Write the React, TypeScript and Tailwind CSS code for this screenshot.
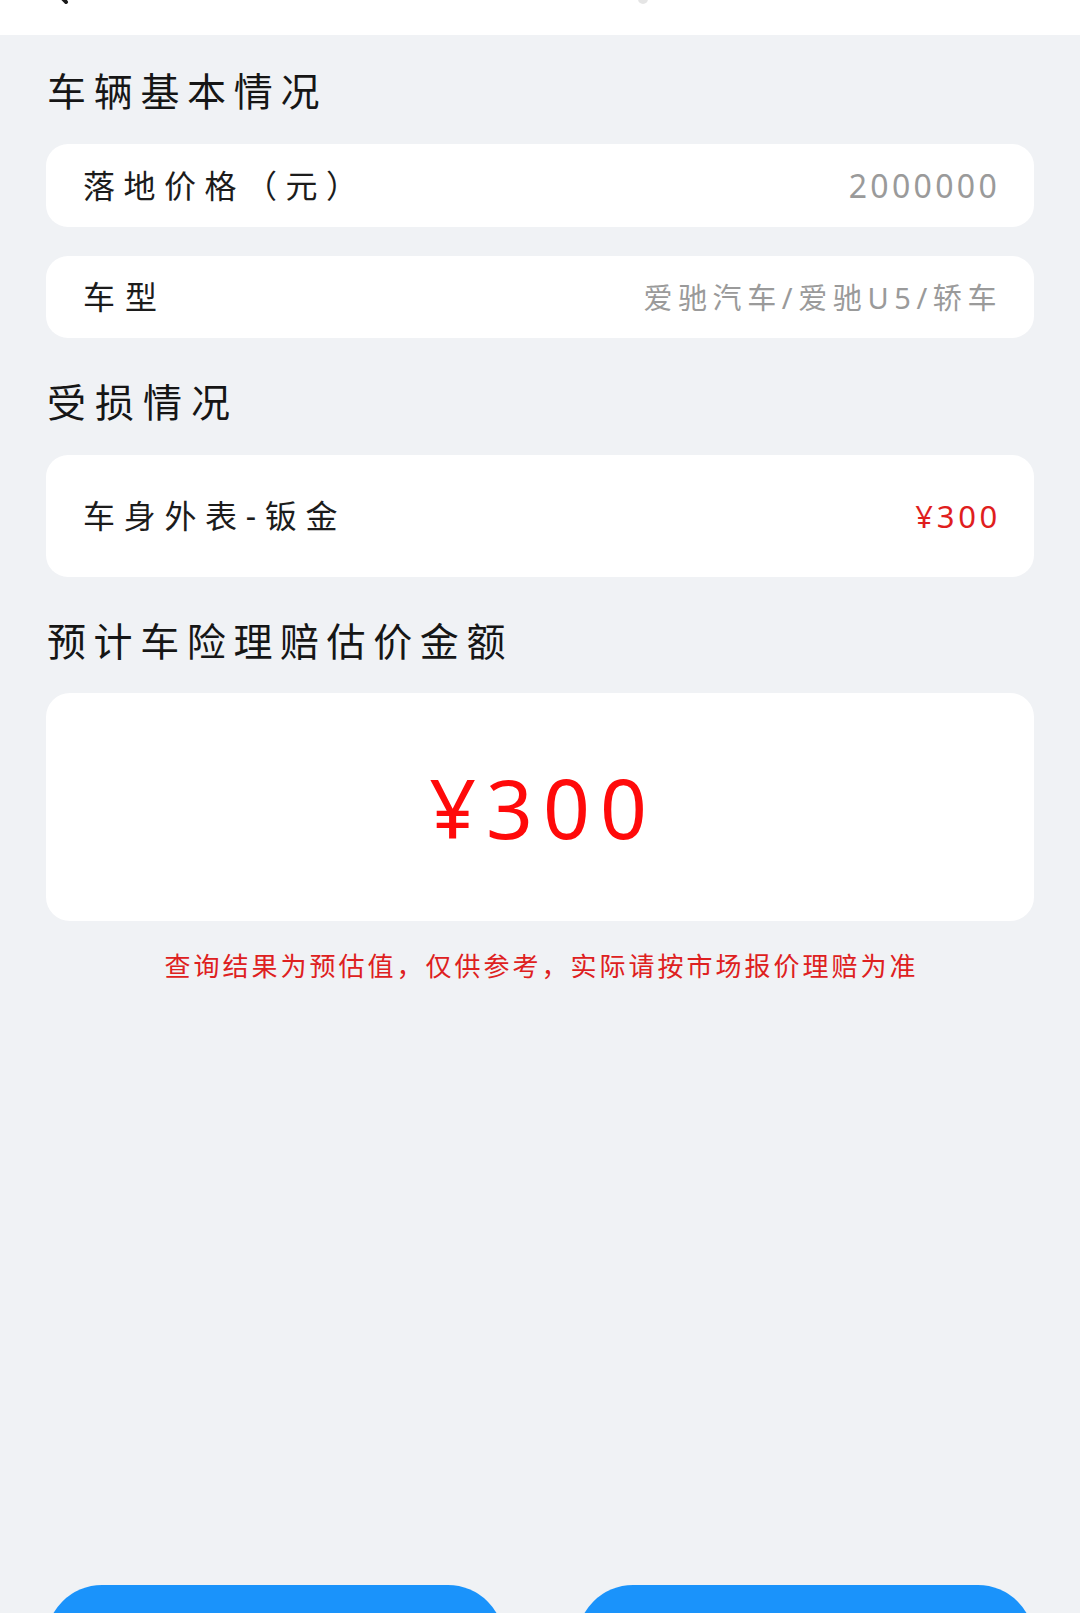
import React from "react";

const font = { fontFamily: "'Noto Sans', 'Noto Sans CJK SC', sans-serif" };

function Heading({ children, className = "" }: { children: React.ReactNode; className?: string }) {
  return (
    <div className={`text-[39px] leading-[36px] text-[#161616] whitespace-nowrap ${className}`}>
      {children}
    </div>
  );
}

function Row({
  label,
  value,
  valueClass,
  height,
  labelTracking,
}: {
  label: string;
  value: string;
  valueClass: string;
  height: string;
  labelTracking: string;
}) {
  return (
    <div className={`flex items-center justify-between bg-white rounded-[22px] px-[37px] ${height}`}>
      <span className={`text-[32px] leading-[32px] text-[#1c1c1c] whitespace-nowrap ${labelTracking}`}>{label}</span>
      <span className={`whitespace-nowrap ${valueClass}`}>{value}</span>
    </div>
  );
}

export default function App() {
  return (
    <div className="w-[1080px] h-[1613px] overflow-hidden bg-[#f0f2f5] flex flex-col" style={font}>
      <div className="relative h-[35px] bg-white overflow-hidden shrink-0">
        <svg className="absolute left-[44px] top-[-30px]" width="30" height="34" viewBox="0 0 30 34">
          <path d="M22 2 L8 17 L22 32" fill="none" stroke="#1a1a1a" strokeWidth="4" strokeLinecap="round" strokeLinejoin="round" />
        </svg>
        <div className="absolute left-[638px] top-[-6px] w-[10px] h-[10px] rounded-full bg-[#e5e5e5]" />
      </div>

      <div className="px-[46px] flex flex-col">
        <Heading className="mt-[38px] ml-[1px] tracking-[7.7px]">车辆基本情况</Heading>
        <div className="mt-[35px]">
          <Row
            label="落地价格（元）"
            labelTracking="tracking-[8.5px]"
            value="2000000"
            height="h-[83px]"
            valueClass="text-[32px] leading-[32px] tracking-[3.3px] text-[#9a9a9a] mr-[-3px]"
          />
        </div>
        <div className="mt-[29px]">
          <Row
            label="车型"
            labelTracking="tracking-[10px]"
            value="爱驰汽车/爱驰U5/轿车"
            height="h-[82px]"
            valueClass="text-[29px] leading-[29px] tracking-[5.6px] text-[#9a9a9a] mr-[-5px]"
          />
        </div>

        <Heading className="mt-[46px] ml-[1px] tracking-[9px]">受损情况</Heading>
        <div className="mt-[35px]">
          <Row
            label="车身外表-钣金"
            labelTracking="tracking-[8.7px]"
            value="¥300"
            height="h-[122px]"
            valueClass="text-[31px] leading-[31px] tracking-[3.7px] text-[#e01e1e] mr-[-4px]"
          />
        </div>

        <Heading className="mt-[46px] ml-[1px] tracking-[7.6px]">预计车险理赔估价金额</Heading>
        <div className="mt-[34px] h-[228px] bg-white rounded-[24px] flex items-center justify-center">
          <span className="text-[82px] leading-[82px] tracking-[10px] text-[#ff0a0a] ml-[6px]">¥300</span>
        </div>

        <div className="mt-[30px] h-[30px] flex items-center justify-center">
          <span className="text-[26px] leading-[30px] tracking-[3px] text-[#de2020] whitespace-nowrap ml-[3px]">
            查询结果为预估值，仅供参考，实际请按市场报价理赔为准
          </span>
        </div>

        <div className="mt-[604px] grid grid-cols-2 gap-[73px] shrink-0">
          <div className="h-[112px] rounded-full bg-[#1a93fb]" />
          <div className="h-[112px] rounded-full bg-[#1a93fb]" />
        </div>
      </div>
    </div>
  );
}
